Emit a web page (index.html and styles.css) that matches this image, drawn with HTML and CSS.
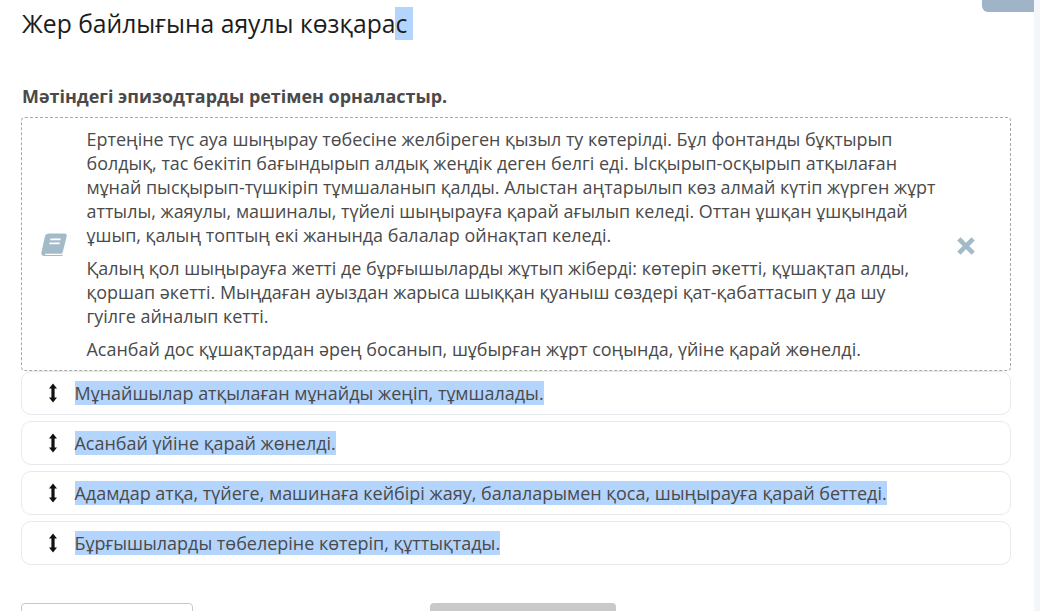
FILE: index.html
```html
<!DOCTYPE html>
<html lang="en">
<head>
    <meta charset="UTF-8">
    <meta name="viewport" content="width=device-width, initial-scale=1.0">
    <title>Жер байлығына аяулы көзқарас</title>
    <link rel="stylesheet" href="styles.css">
</head>
<body>
    <div class="page">
        <main class="content">
            <div class="top-tab-row"><div class="top-tab"></div></div>
            <h1 class="title">Жер байлығына аяулы көзқара<span class="selected title-end">с</span></h1>
            <p class="question">Мәтіндегі эпизодтарды ретімен орналастыр.</p>

            <div class="text-card">
                <div class="book-col">
                    <svg class="book-icon" viewBox="0 0 26 24" aria-hidden="true">
                        <path fill="#a3bac9" d="M8 0.5h15.500c1.600 0 2.600 1.200 2.200 2.800l-3.900 15.600c-.3 1.200-1.100 1.900-2.300 1.900H5.500c-1 0-1.500.5-1.500 1.100h16c.6 0 1-.1 1.300-.6l.5 1c-.3.5-.9.7-1.600.7H3.200C1.200 23 0 21.500.4 19.500L3.900 3.500C4.300 1.600 6 .5 8 .5z"/>
                        <path fill="#ffffff" d="M9.500 5.500h10.300l-.4 1.800H9.100zM8.600 9.500h10.300l-.4 1.800H8.200z"/>
                    </svg>
                </div>
                <div class="text-col">
                    <p>Ертеңіне түс ауа шыңырау төбесіне желбіреген қызыл ту көтерілді. Бұл фонтанды бұқтырып болдық, тас бекітіп бағындырып алдық жеңдік деген белгі еді. Ысқырып-осқырып атқылаған мұнай пысқырып-түшкіріп тұмшаланып қалды. Алыстан аңтарылып көз алмай күтіп жүрген жұрт аттылы, жаяулы, машиналы, түйелі шыңырауға қарай ағылып келеді. Оттан ұшқан ұшқындай ұшып, қалың топтың екі жанында балалар ойнақтап келеді.</p>
                    <p>Қалың қол шыңырауға жетті де бұрғышыларды жұтып жіберді: көтеріп әкетті, құшақтап алды, қоршап әкетті. Мыңдаған ауыздан жарыса шыққан қуаныш сөздері қат-қабаттасып у да шу гуілге айналып кетті.</p>
                    <p>Асанбай дос құшақтардан әрең босанып, шұбырған жұрт соңында, үйіне қарай жөнелді.</p>
                </div>
                <div class="close-col">
                    <svg class="close-icon" viewBox="0 0 20 20" aria-hidden="true">
                        <path fill="#a3bac9" d="M4.500 1.200L10 6.700l5.500-5.500 3.300 3.300L13.300 10l5.500 5.500-3.300 3.300L10 13.300l-5.500 5.500-3.300-3.300L6.700 10 1.200 4.500z"/>
                    </svg>
                </div>
            </div>

            <ul class="sort-list">
                <li class="sort-item">
                    <svg class="drag-icon" viewBox="0 0 10 20" aria-hidden="true"><path d="M5 0.500L9 5.500H6.600v9H9L5 19.500 1 14.500h2.400v-9H1z"/></svg>
                    <span class="selected">Мұнайшылар атқылаған мұнайды жеңіп, тұмшалады.</span>
                </li>
                <li class="sort-item">
                    <svg class="drag-icon" viewBox="0 0 10 20" aria-hidden="true"><path d="M5 0.500L9 5.500H6.600v9H9L5 19.500 1 14.500h2.400v-9H1z"/></svg>
                    <span class="selected">Асанбай үйіне қарай жөнелді.</span>
                </li>
                <li class="sort-item">
                    <svg class="drag-icon" viewBox="0 0 10 20" aria-hidden="true"><path d="M5 0.500L9 5.500H6.600v9H9L5 19.500 1 14.500h2.400v-9H1z"/></svg>
                    <span class="selected">Адамдар атқа, түйеге, машинаға кейбірі жаяу, балаларымен қоса, шыңырауға қарай беттеді.</span>
                </li>
                <li class="sort-item">
                    <svg class="drag-icon" viewBox="0 0 10 20" aria-hidden="true"><path d="M5 0.500L9 5.500H6.600v9H9L5 19.500 1 14.500h2.400v-9H1z"/></svg>
                    <span class="selected">Бұрғышыларды төбелеріне көтеріп, құттықтады.</span>
                </li>
            </ul>

            <div class="actions">
                <button class="btn-back"></button>
                <button class="btn-next"></button>
            </div>
        </main>
        <div class="scroll-strip"></div>
    </div>
</body>
</html>
```

FILE: styles.css
```css
html, body {
    margin: 0;
    height: 100%;
    overflow: hidden;
    background-color: white;
}
body {
    font-family: "Open Sans", "Noto Sans", sans-serif;
    color: #4a4a4a;
}
.page {
    display: flex;
    height: 611px;
    overflow: hidden;
}
.content {
    flex: 1;
    min-width: 0;
    padding: 0 23px 0 21px;
    position: relative;
}
.scroll-strip {
    width: 6px;
    background-color: #f3f6fa;
}
.top-tab-row {
    position: absolute;
    top: 0;
    right: 0;
}
.top-tab {
    width: 52px;
    height: 12px;
    background-color: #9fb5c7;
    border-bottom-left-radius: 6px;
}
.selected {
    background-color: #b3d4fc;
}
.title {
    margin: 7px 0 0 1px;
    font-size: 24.7px;
    line-height: 33px;
    font-weight: 400;
    color: #1c1c1c;
}
.title-end {
    padding-right: 6px;
}
.question {
    margin: 44px 0 0 1px;
    font-size: 17.97px;
    line-height: 24px;
    font-weight: 700;
}
.text-card {
    display: flex;
    align-items: center;
    height: 254px;
    box-sizing: border-box;
    margin-top: 9px;
    padding-top: 2px;
    border: 1px dashed #a8a8a8;
    border-radius: 4px;
}
.book-col {
    width: 64.5px;
    flex: none;
    display: flex;
    justify-content: flex-end;
    padding-right: 19.5px;
    box-sizing: border-box;
}
.book-icon {
    width: 26px;
    height: 24px;
}
.text-col {
    width: 856.5px;
    flex: none;
    padding: 0 6px 2px 0;
    box-sizing: border-box;
    font-size: 17.95px;
    line-height: 24px;
}
.text-col p {
    margin: 0 0 9px;
}
.text-col p:last-child {
    margin-bottom: 0;
}
.close-col {
    flex: 1;
    display: flex;
    padding-left: 13px;
}
.close-icon {
    width: 20px;
    height: 20px;
    margin-top: 2px;
}
.sort-list {
    list-style: none;
    margin: 0;
    padding: 0;
}
.sort-item {
    display: flex;
    align-items: center;
    height: 44px;
    box-sizing: border-box;
    margin-bottom: 6px;
    border: 1px solid #e6eaee;
    border-radius: 10px;
    font-size: 17.98px;
    line-height: 24px;
}
.drag-icon {
    width: 10px;
    height: 20px;
    margin-left: 26px;
    margin-right: 16.5px;
    fill: #111111;
}
.actions {
    display: flex;
    margin-top: 38px;
}
.actions button {
    height: 40px;
    border-radius: 4px;
    padding: 0;
}
.btn-back {
    width: 172px;
    background-color: white;
    border: 1px solid #c4c9ce;
}
.btn-next {
    width: 186px;
    margin-left: 237px;
    background-color: #c9c9c9;
    border: none;
}
```
